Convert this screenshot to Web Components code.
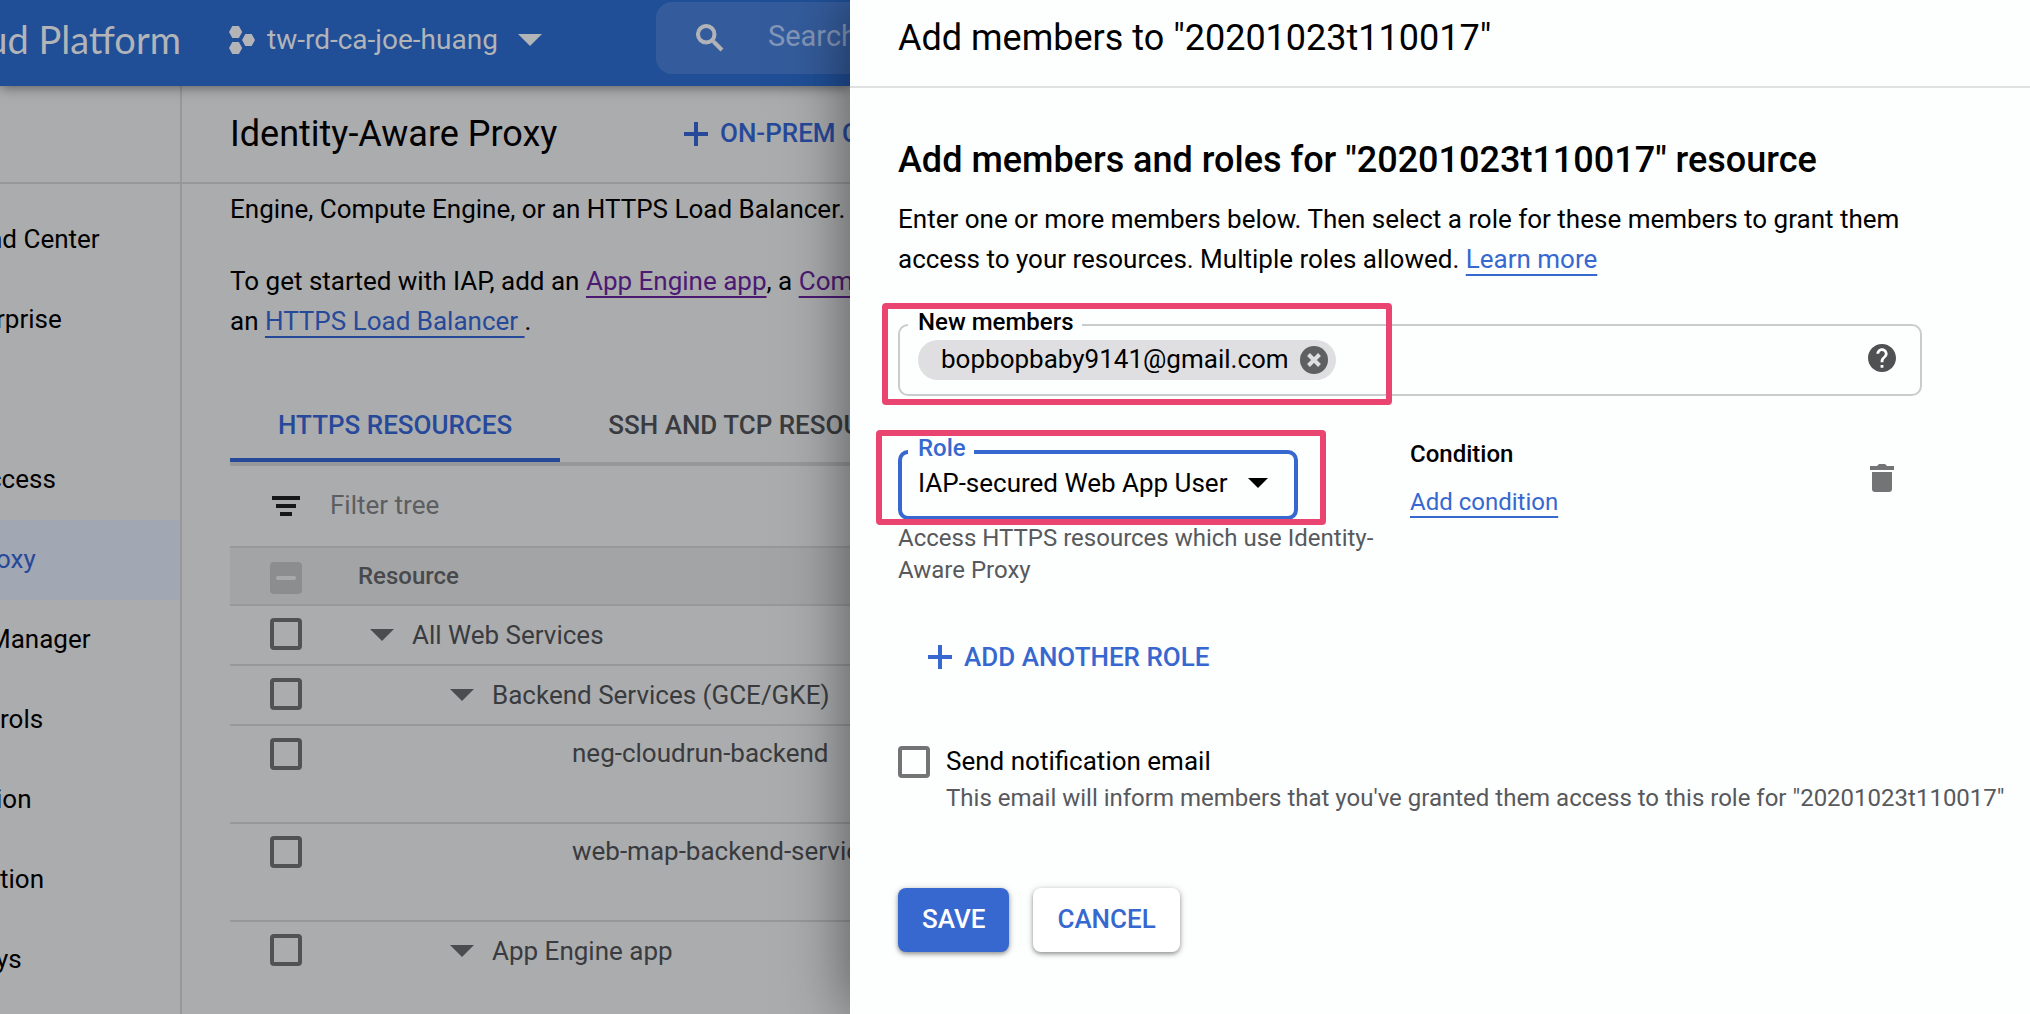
<!DOCTYPE html>
<html lang="en">
<head>
<meta charset="utf-8">
<title>Identity-Aware Proxy</title>
<style>
html, body { margin: 0; height: 100%; overflow: hidden; }
body { font: 400 26px/40px Roboto, "Liberation Sans", sans-serif; color: #000; background: #fdfefe; }
</style>
</head>
<body>
<iap-page></iap-page>
<script>
const define = (name, html) => customElements.define(name, class extends HTMLElement {
  constructor() {
    super();
    const t = document.createElement('template');
    t.innerHTML = '<style>*{box-sizing:border-box}h1,h2,p{margin:0;font-weight:inherit}button,input,select{font:inherit;color:inherit;border:0;padding:0;margin:0;background:none;outline:0;border-radius:0}svg{display:block;flex:none}</style>' + html;
    this.attachShadow({ mode: 'open' }).append(t.content.cloneNode(true));
    this.ready?.();
  }
});

define('top-bar', `
<style>
:host { display: flex; align-items: flex-start; height: 86px; background: #204f97; color: #b2b4b8; position: relative; box-shadow: 0 1px 12px rgba(0,0,0,.5); white-space: nowrap; }
.brand { width: 181px; flex: none; display: flex; justify-content: flex-end; overflow: hidden; font: 400 38px/78px Lato, sans-serif; }
.project { display: flex; align-items: center; height: 80px; margin-left: 48px; width: 427px; flex: none; font-size: 28px; text-align: left; cursor: pointer; }
.project span { margin: 0 20px 0 12px; }
.search { display: flex; align-items: center; flex: 1 0 400px; height: 72px; margin-top: 2px; padding-left: 36px; border-radius: 16px; background: #345c9c; }
input { flex: 1; min-width: 0; margin-left: 40px; padding-bottom: 4px; height: 72px; font-size: 29px; }
input::placeholder { color: #8496b8; opacity: 1; }
</style>
<div class="brand">ud Platform</div>
<button class="project">
  <svg width="26" height="28" viewBox="0 0 26 28" fill="#b2b4b8"><path d="M3.300 0h6.600L13.200 6l-3.300 6H3.300L0 6zM16.300 8h6.400L26 14l-3.300 6h-6.400L13 14zM3.300 16h6.600l3.300 6-3.300 6H3.300L0 22z"/></svg>
  <span>tw-rd-ca-joe-huang</span>
  <svg width="24" height="12" viewBox="0 0 24 12" fill="#b2b4b8"><path d="M0 0h24L12 12z"/></svg>
</button>
<div class="search">
  <svg width="36" height="36" viewBox="0 0 24 24" fill="#b2b4b8" stroke="#b2b4b8" stroke-width=".7"><path d="M15.500 14h-.79l-.28-.27A6.470 6.470 0 0 0 16 9.500 6.500 6.500 0 1 0 9.500 16c1.610 0 3.090-.59 4.230-1.570l.27.28v.79l5 4.990L20.490 19l-4.990-5zm-6 0C7.010 14 5 11.990 5 9.500S7.010 5 9.500 5 14 7.010 14 9.500 11.990 14 9.500 14z"/></svg>
  <input type="search" aria-label="Search" placeholder="Search">
</div>`);

define('side-nav', `
<style>
:host { display: block; width: 182px; flex: none; border-right: 2px solid #97989a; overflow: hidden; }
.head { height: 98px; border-bottom: 2px solid #97989a; }
nav { padding-top: 16px; }
::slotted(a) { display: block; height: 80px; line-height: 78px; color: #000; text-decoration: none; white-space: nowrap; text-indent: -4px; }
::slotted(a.cut) { text-indent: -12px; }
::slotted(a.on) { background: #a1a7b3; color: #27499a; }
::slotted(a.gap) { margin-top: 80px; }
::slotted(a.flush) { text-indent: 0; }
</style>
<div class="head"></div><nav><slot></slot></nav>`);

define('resource-table', `
<style>
:host { display: block; }
.filter { display: flex; align-items: center; height: 80px; padding-left: 42px; }
.filter input { margin-left: 30px; padding-bottom: 2px; flex: 1; }
.filter input::placeholder { color: #5c5e61; opacity: 1; }
table { width: 100%; border-collapse: collapse; table-layout: fixed; color: #393b3e; line-height: 56px; }
tr { border-top: 2px solid #97989a; vertical-align: top; height: 60px; }
tr.tall { height: 98px; }
thead tr { height: 58px; background: #a3a4a6; }
th { font-weight: 500; font-size: 24px; text-align: left; padding: 0; color: #47494c; }
td { padding: 0; white-space: nowrap; }
.c { width: 128px; padding-left: 40px; padding-top: 12px; line-height: 0; }
input[type=checkbox] { appearance: none; display: block; width: 32px; height: 32px; border: 4px solid #505254; border-radius: 4px; }
thead .c { padding-top: 14px; }
thead input[type=checkbox] { border: 0; background: #8c8d8f; display: grid; place-items: center; }
thead input[type=checkbox]::before { content: ""; width: 20px; height: 4px; border-radius: 2px; background: #a8a9ab; }
.n { display: flex; align-items: center; height: 58px; padding-left: 12px; }
.n.l2 { padding-left: 92px; }
.n.l3 { padding-left: 214px; height: 54px; }
.n button { margin-right: 18px; }
</style>
<div class="filter">
  <svg width="28" height="20" viewBox="0 0 28 20" fill="#151719"><path d="M0 0h28v4H0zM4 8h20v4H4zM8 16h12v4H8z"/></svg>
  <input type="text" aria-label="Filter tree" placeholder="Filter tree">
</div>
<table>
<thead><tr><th class="c"><input type="checkbox" aria-label="Select all"></th><th>Resource</th></tr></thead>
<tbody></tbody>
</table>`);
const ROWS = [[1, 'All Web Services'], [2, 'Backend Services (GCE/GKE)'], [3, 'neg-cloudrun-backend'], [3, 'web-map-backend-servic'], [2, 'App Engine app']];
customElements.get('resource-table').prototype.ready = function () {
  this.shadowRoot.querySelector('tbody').innerHTML = ROWS.map(([l, name], i) => `
<tr class="${l === 3 ? 'tall' : ''}"><td class="c"><input type="checkbox" id="r${i}" aria-label="${name}"></td>
<td><div class="n l${l}">${l < 3 ? '<button aria-label="Collapse"><svg width="24" height="12" viewBox="0 0 24 12" fill="#4a4c4f"><path d="M0 0h24L12 12z"/></svg></button>' : ''}<label for="r${i}">${name}</label></div></td></tr>`).join('');
};

define('main-view', `
<style>
:host { display: block; flex: 1; min-width: 0; }
.bar { display: flex; align-items: center; height: 98px; padding-left: 48px; border-bottom: 2px solid #97989a; white-space: nowrap; }
h1 { font-size: 36px; line-height: 44px; width: 454px; flex: none; }
.bar button { display: flex; align-items: center; gap: 12px; color: #27499a; font-weight: 500; }
.bar button span { padding-bottom: 2px; }
.body { padding: 5px 0 0 48px; white-space: nowrap; }
p { margin-bottom: 32px; }
a { color: #27499a; text-decoration: underline 2px; text-underline-offset: 6px; text-decoration-skip-ink: none; }
a.seen { color: #4c1a73; }
.tabs { display: flex; margin-top: 43px; border-bottom: 4px solid #97989a; font-weight: 500; color: #393b3e; }
.tabs button { padding: 8px 48px 0; height: 78px; border-bottom: 4px solid transparent; flex: none; }
.tabs .on { color: #27499a; border-color: #27499a; }
</style>
<div class="bar"><h1>Identity-Aware Proxy</h1>
<button><svg width="24" height="24" viewBox="0 0 24 24" fill="#27499a"><path d="M10 0h4v10h10v4H14v10h-4V14H0v-4h10z"/></svg><span>ON-PREM C</span></button></div>
<div class="body">
<p>Engine, Compute Engine, or an HTTPS Load Balancer.</p>
<p>To get started with IAP, add an <a class="seen" href="#app">App Engine app</a>, a <a class="seen" href="#gce">Com</a><br>an <a href="#lb">HTTPS Load Balancer&nbsp;</a>.</p>
<div class="tabs"><button class="on">HTTPS RESOURCES</button><button>SSH AND TCP RESOU</button></div>
<resource-table></resource-table>
</div>`);

define('outlined-field', `
<style>
:host { display: block; position: relative; height: 72px; }
.box { display: flex; align-items: center; height: 100%; border: 2px solid #c9cbcc; border-radius: 10px; padding: 0 24px 0 18px; }
:host([focused]) { height: 70px; width: 400px; }
:host([focused]) .box { border: 4px solid #3768d0; padding: 0 0 4px 16px; }
.label { position: absolute; left: 10px; top: -16px; padding: 0 8px 0 10px; background: #fdfefe; font-size: 24px; line-height: 28px; font-weight: 500; }
:host([focused]) .label { color: #3768d0; }
</style>
<div class="box"><slot></slot></div><div class="label"><slot name="label"></slot></div>`);

define('callout-frame', `
<style>
:host { display: block; position: relative; }
.frame { position: absolute; border: 6px solid #ea4570; border-radius: 4px; pointer-events: none; inset: var(--inset); width: var(--w); }
</style>
<slot></slot><div class="frame"></div>`);

define('member-chip', `
<style>
:host { display: flex; align-items: center; gap: 11px; height: 40px; padding: 0 8px 0 23px; border-radius: 20px; background: #dfdfe1; flex: none; }
span { padding-bottom: 2px; }
</style>
<span><slot></slot></span>
<button aria-label="Remove"><svg width="28" height="28" viewBox="0 0 28 28"><circle cx="14" cy="14" r="14" fill="#5f6062"/><path d="M8.500 8.500l11 11M19.500 8.500l-11 11" stroke="#dfdfe1" stroke-width="4"/></svg></button>`);

define('members-drawer', `
<style>
:host { display: block; min-width: 0; background: #fdfefe; position: relative; box-shadow: 0 0 60px rgba(0,0,0,.52); }
.head { height: 88px; padding: 16px 48px 0; border-bottom: 2px solid #dfe0e1; font-size: 36px; line-height: 44px; }
.body { padding: 50px 24px 0 48px; }
.wide { margin-right: 84px; }
h2 { font-size: 36px; line-height: 44px; font-weight: 500; margin-bottom: 17px; }
a { color: #3768d0; text-decoration: underline 2px; text-underline-offset: 6px; text-decoration-skip-ink: none; }
.members { margin-top: 45px; --inset: -21px auto -9px -16px; --w: 510px; }
.members input { flex: 1; min-width: 0; height: 40px; }
.members button { margin-bottom: 4px; }
.roles { display: grid; grid-template-columns: 480px 1fr auto; column-gap: 32px; margin-top: 41px; font-size: 24px; line-height: 32px; }
.role { margin-top: 13px; --inset: -20px auto -5px -22px; --w: 450px; font-size: 26px; }
.role div { display: grid; flex: 1; align-items: center; grid-template-columns: 1fr; }
.role div > * { grid-area: 1 / 1; }
.role svg { justify-self: end; margin-right: 26px; pointer-events: none; }
select { appearance: none; width: 100%; height: 40px; }
.hint { color: #57595c; font-size: 24px; line-height: 32px; }
.roles .hint { margin-top: 2px; }
b { display: block; font-weight: 500; margin: 1px 0 16px; }
.del { align-self: start; margin: 27px 28px 0 0; }
.add { display: flex; align-items: center; gap: 12px; margin: 51px 0 64px 30px; color: #3768d0; font-weight: 500; }
.notify { display: grid; grid-template-columns: 32px 1fr; column-gap: 16px; row-gap: 1px; white-space: nowrap; }
.notify input { appearance: none; width: 32px; height: 32px; margin-top: 5px; border: 4px solid #737476; border-radius: 4px; }
.notify .hint { grid-column: 2; }
.actions { display: flex; gap: 24px; margin-top: 74px; }
.actions button { height: 64px; padding: 0 24px 2px; border-radius: 8px; font-weight: 500; color: #3768d0; background: #fff; box-shadow: 0 2px 4px rgba(0,0,0,.36), 0 1px 8px rgba(0,0,0,.14); }
.actions .save { color: #fff; background: #3768d0; }
</style>
<h1 class="head">Add members to "20201023t110017"</h1>
<div class="body">
<div class="wide">
<h2>Add members and roles for "20201023t110017" resource</h2>
<p>Enter one or more members below. Then select a role for these members to grant them access to your resources. Multiple roles allowed. <a href="#learn">Learn more</a></p>
<callout-frame class="members"><outlined-field>
  <label slot="label" for="members">New members</label>
  <member-chip>bopbopbaby9141@gmail.com</member-chip>
  <input id="members" type="text">
  <button aria-label="Help"><svg width="28" height="28" viewBox="2 2 20 20" fill="#4f5153"><path d="M12 2C6.480 2 2 6.480 2 12s4.480 10 10 10 10-4.480 10-10S17.520 2 12 2zm1 17h-2v-2h2v2zm2.070-7.750l-.9.920C13.450 12.900 13 13.500 13 15h-2v-.5c0-1.100.45-2.100 1.170-2.830l1.240-1.260c.37-.36.59-.86.59-1.410 0-1.100-.9-2-2-2s-2 .9-2 2H8c0-2.210 1.790-4 4-4s4 1.790 4 4c0 .88-.36 1.680-.93 2.250z"/></svg></button>
</outlined-field></callout-frame>
<div class="roles">
  <div>
    <callout-frame class="role"><outlined-field focused>
      <label slot="label" for="role">Role</label>
      <div><select id="role"><option>IAP-secured Web App User</option></select>
      <svg width="20" height="10" viewBox="0 0 20 10"><path d="M0 0h20L10 10z"/></svg></div>
    </outlined-field></callout-frame>
    <p class="hint">Access HTTPS resources which use Identity-Aware Proxy</p>
  </div>
  <div><b>Condition</b><a href="#condition">Add condition</a></div>
  <button class="del" aria-label="Delete role"><svg width="24" height="28" viewBox="0 0 24 28" fill="#737476"><path d="M7 2l2-2h6l2 2h7v4H0V2zM2 8h20v17a3 3 0 0 1-3 3H5a3 3 0 0 1-3-3z"/></svg></button>
</div>
</div>
<button class="add"><svg width="24" height="24" viewBox="0 0 24 24" fill="#3768d0"><path d="M10 0h4v10h10v4H14v10h-4V14H0v-4h10z"/></svg>ADD ANOTHER ROLE</button>
<div class="notify"><input type="checkbox" id="notify"><label for="notify">Send notification email</label>
<p class="hint">This email will inform members that you've granted them access to this role for "20201023t110017"</p></div>
<div class="actions"><button class="save">SAVE</button><button>CANCEL</button></div>
</div>`);

define('iap-page', `
<style>
:host { display: grid; grid-template-columns: 850px minmax(0, 1fr); min-height: 100vh; }
.back { display: flex; flex-direction: column; overflow: hidden; background: #abacae; height: 100vh; min-width: 0; }
.cols { display: flex; flex: 1; min-height: 0; }
</style>
<div class="back">
<top-bar></top-bar>
<div class="cols">
<side-nav>
<a class="cut" href="#1">nd Center</a><a href="#2">rprise</a><a class="gap cut" href="#3">ccess</a><a class="on" href="#4">oxy</a><a class="cut" href="#5">Manager</a><a class="flush" href="#6">rols</a><a href="#7">ion</a><a class="flush" href="#8">tion</a><a href="#9">ys</a>
</side-nav>
<main-view></main-view>
</div>
</div>
<members-drawer></members-drawer>`);
</script>
</body>
</html>
